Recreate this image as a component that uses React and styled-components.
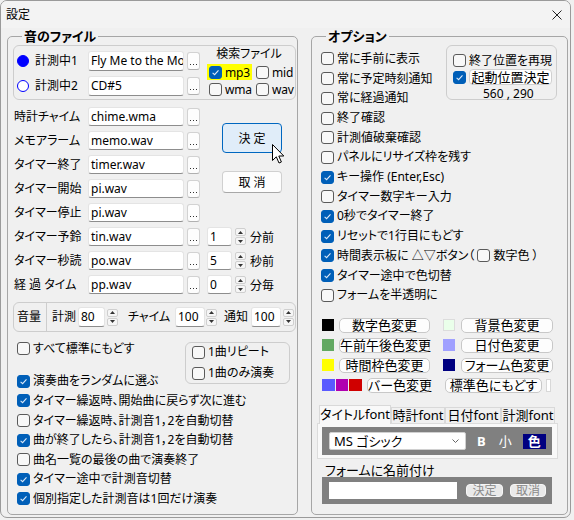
import React from 'react';
import styled, { createGlobalStyle } from 'styled-components';

const Global = createGlobalStyle`
  html, body { margin: 0; padding: 0; background: #f0f0f0; }
  body {
    font-family: "Noto Sans", "Noto Sans CJK JP", sans-serif;
    font-size: 12px;
    color: #000;
    font-feature-settings: "palt";
  }
  * { box-sizing: border-box; }
`;

const Window = styled.div`
  position: relative;
  width: 571px;
  height: 518px;
  background: #f0f0f0;
  border: 1px solid #9a9a9a;
  border-radius: 7px;
  overflow: hidden;
  display: flex;
  flex-direction: column;
`;

const TitleBar = styled.div`
  height: 27px;
  flex: none;
  display: flex;
  align-items: center;
  justify-content: space-between;
  padding: 0 8px 0 5px;
  background: #f3f3f3;
`;

const Title = styled.span`
  font-size: 12px;
  line-height: 14px;
`;

const Body = styled.div`
  display: flex;
  gap: 13px;
  padding: 0 2px 0 6px;
`;

const FieldSet = styled.fieldset`
  margin: 0;
  padding: 0;
  min-width: 0;
  flex: none;
  width: ${(p) => p.$w}px;
  height: 487px;
  border: 1px solid #a6a6a6;
  border-radius: 5px;
`;

const Legend = styled.legend`
  margin-left: 14px;
  padding: 0 2px;
  font-weight: bold;
  font-size: 13px;
  line-height: 16px;
`;

const LeftContent = styled.div`
  padding: 1px 1px 0 5px;
  display: flex;
  flex-direction: column;
`;

const RightContent = styled.div`
  padding: 1px 10px 0 9px;
  display: flex;
  flex-direction: column;
`;

const RoundBox = styled.div`
  border: 1px solid #cdcdcd;
  border-radius: 6px;
`;

const RadioBox = styled(RoundBox)`
  display: flex;
  height: 55px;
  padding: 5px 0 0 3px;
`;

const Col = styled.div`
  display: flex;
  flex-direction: column;
  gap: ${(p) => p.$gap || 0}px;
`;

const FieldRow = styled.div`
  display: flex;
  align-items: center;
  height: ${(p) => p.$h || 19}px;
`;

const Radio = styled.span`
  flex: none;
  width: 12px;
  height: 12px;
  border-radius: 50%;
  border: 1px solid #0000ff;
  background: ${(p) => (p.$on ? '#0000ff' : '#fff')};
  margin-right: 6px;
`;

const RowLabel = styled.span`
  flex: none;
  width: ${(p) => p.$w}px;
  margin-left: ${(p) => p.$ml || 0}px;
  padding-left: ${(p) => p.$pl || 0}px;
  white-space: nowrap;
  font-size: 12px;
  line-height: 14px;
`;

const TextField = styled.div`
  flex: none;
  width: ${(p) => p.$w}px;
  height: ${(p) => p.$h || 19}px;
  margin-left: ${(p) => p.$ml || 0}px;
  background: #fff;
  border: 1px solid #e4e4e4;
  border-bottom-color: #8d8d8d;
  border-radius: 3px;
  padding: 0 2px;
  font-size: 12px;
  line-height: ${(p) => (p.$h || 19) - 2}px;
  white-space: nowrap;
  overflow: hidden;
`;

const DotButtonEl = styled.div`
  flex: none;
  width: 13px;
  height: 18px;
  margin-left: 3px;
  background: #fdfdfd;
  border: 1px solid #d2d2d2;
  border-bottom-color: #b0b0b0;
  border-radius: 3px;
  display: flex;
  align-items: flex-end;
  justify-content: center;
  padding-bottom: 4px;
`;

const DotButton = () => (
  <DotButtonEl>
    <svg width="7" height="1" viewBox="0 0 7 1">
      <rect x="0" y="0" width="1" height="1" fill="#333" />
      <rect x="3" y="0" width="1" height="1" fill="#333" />
      <rect x="6" y="0" width="1" height="1" fill="#333" />
    </svg>
  </DotButtonEl>
);

const SearchCol = styled.div`
  margin-left: 7px;
  margin-top: -4px;
  display: flex;
  flex-direction: column;
`;

const SearchTitle = styled.div`
  width: 84px;
  text-align: center;
  font-size: 12px;
  line-height: 14px;
`;

const SearchGrid = styled.div`
  display: grid;
  grid-template-columns: 47px 38px;
  row-gap: 1px;
  margin-top: 3px;
`;

const FileCell = styled.div`
  justify-self: start;
  display: inline-flex;
  align-items: center;
  gap: 3px;
  height: 16px;
  padding: 0 2px 0 2px;
  background: ${(p) => (p.$hl ? '#ffff00' : 'transparent')};
  font-size: 12px;
  letter-spacing: -0.2px;
`;

const BoxEl = styled.span`
  flex: none;
  width: 13px;
  height: 13px;
  border-radius: 3px;
  border: 1px solid ${(p) => (p.$on ? '#005fb8' : '#5a5a5a')};
  background: ${(p) => (p.$on ? '#005fb8' : '#f8f8f8')};
  display: inline-flex;
  align-items: center;
  justify-content: center;
`;

const Check = ({ on }) => (
  <BoxEl $on={on}>
    {on && (
      <svg width="9" height="9" viewBox="0 0 9 9">
        <path d="M1.6 4.9 L3.6 6.7 L7.5 2.3" fill="none" stroke="#dbe8f7" strokeWidth="1.1" />
      </svg>
    )}
  </BoxEl>
);

const CheckRowEl = styled.div`
  display: flex;
  align-items: center;
  gap: 3px;
  height: ${(p) => p.$h || 19.6}px;
  white-space: nowrap;
  font-size: 12px;
  line-height: 14px;
`;

const CheckRow = ({ on, children, h }) => (
  <CheckRowEl $h={h}>
    <Check on={on} />
    <span>{children}</span>
  </CheckRowEl>
);

const FileArea = styled.div`
  margin-top: 7px;
  display: flex;
  flex-direction: column;
  gap: 5px;
`;

const TopRows = styled.div`
  display: flex;
`;

const ButtonCol = styled.div`
  display: flex;
  flex-direction: column;
  margin-left: 22px;
  padding-top: 16px;
`;

const DialogButton = styled.div`
  width: 60px;
  height: ${(p) => (p.$primary ? 30 : 22)}px;
  margin-top: ${(p) => p.$mt || 0}px;
  background: ${(p) => (p.$primary ? '#e0edf9' : '#fdfdfd')};
  border: 1px solid ${(p) => (p.$primary ? '#0067c0' : '#d0d0d0')};
  border-bottom-color: ${(p) => (p.$primary ? '#0067c0' : '#a8a8a8')};
  border-radius: 4px;
  display: flex;
  align-items: center;
  justify-content: center;
  font-size: 12px;
  white-space: pre;
`;

const SpinWrap = styled.div`
  flex: none;
  margin-left: ${(p) => p.$ml ?? 3}px;
  width: 11px;
  display: flex;
  flex-direction: column;
  gap: 1px;
`;

const SpinHalf = styled.div`
  height: 8px;
  background: #f6f6f6;
  border: 1px solid #cfcfcf;
  border-radius: 2px;
  display: flex;
  align-items: center;
  justify-content: center;
`;

const Spinner = ({ ml }) => (
  <SpinWrap $ml={ml}>
    <SpinHalf>
      <svg width="5" height="3" viewBox="0 0 5 3"><path d="M0 3 L2.5 0 L5 3 Z" fill="#333" /></svg>
    </SpinHalf>
    <SpinHalf>
      <svg width="5" height="3" viewBox="0 0 5 3"><path d="M0 0 L2.5 3 L5 0 Z" fill="#333" /></svg>
    </SpinHalf>
  </SpinWrap>
);

const Unit = styled.span`
  margin-left: ${(p) => p.$ml || 4}px;
  font-size: 12px;
  white-space: nowrap;
`;

const VolumeBox = styled(RoundBox)`
  margin-top: 8px;
  height: 30px;
  display: flex;
  align-items: center;
  padding-left: 3px;
`;

const Divider = styled.span`
  align-self: stretch;
  width: 1px;
  background: #cdcdcd;
`;

const BlockC = styled.div`
  margin-top: 7px;
  display: flex;
  justify-content: space-between;
`;

const LeftChecks = styled.div`
  display: flex;
  flex-direction: column;
  gap: ${(p) => p.$gap || 0}px;
  padding-left: 4px;
`;

const RepeatBox = styled(RoundBox)`
  margin-top: 3px;
  margin-right: 6px;
  width: 105px;
  height: 42px;
  padding-left: 6px;
  display: flex;
  flex-direction: column;
  gap: 3px;
`;

const RightTop = styled.div`
  display: flex;
  justify-content: space-between;
  align-items: flex-start;
`;

const TopList = styled.div`
  padding-top: 4.15px;
  display: flex;
  flex-direction: column;
`;

const PosBox = styled(RoundBox)`
  width: 111px;
  height: 55px;
  padding: 5px 0 0 6px;
  display: flex;
  flex-direction: column;
`;

const PosRow = styled.div`
  display: flex;
  align-items: center;
  gap: 3px;
  height: 18px;
  font-size: 12px;
  white-space: nowrap;
`;

const PosButton = styled.div`
  width: 83px;
  height: 16px;
  background: #fff;
  border: 1px solid #d0d0d0;
  border-radius: 4px;
  text-align: center;
  font-size: 13px;
  line-height: 14px;
`;

const Coords = styled.div`
  margin-top: 2px;
  padding-left: 30px;
  font-size: 12px;
  line-height: 14px;
  white-space: pre;
`;

const RightList = styled.div`
  display: flex;
  flex-direction: column;
`;

const InlineText = styled.span`
  display: inline-flex;
  align-items: center;
  gap: 3px;
`;

const ColorGrid = styled.div`
  margin-top: 13px;
  margin-left: 1px;
  display: grid;
  grid-template-columns: 121px 112px;
  row-gap: 6px;
`;

const ColorCell = styled.div`
  display: flex;
  align-items: center;
  height: 14px;
  gap: ${(p) => p.$gap ?? 5}px;
`;

const Swatch = styled.span`
  flex: none;
  width: ${(p) => p.$w || 12}px;
  height: 12px;
  background: ${(p) => p.$c};
  border: ${(p) => (p.$light ? '1px solid #dcdcdc' : 'none')};
`;

const SwatchGroup = styled.span`
  display: flex;
  gap: 1px;
`;

const ColorButton = styled.div`
  flex: none;
  width: ${(p) => p.$w}px;
  height: 15px;
  margin-left: ${(p) => p.$ml || 0}px;
  background: #fdfdfd;
  border: 1px solid #c8c8c8;
  border-radius: 5px;
  text-align: center;
  font-size: 13px;
  line-height: 13px;
  white-space: nowrap;
`;

const StubBar = styled.span`
  width: 5px;
  height: 13px;
  margin-left: 4px;
  background: #fff;
  border: 1px solid #d8d8d8;
`;

const TabStrip = styled.div`
  margin-top: 13px;
  margin-left: -2px;
  display: flex;
  align-items: flex-end;
  position: relative;
  z-index: 1;
`;

const Tab = styled.div`
  flex: none;
  width: ${(p) => p.$w}px;
  height: ${(p) => (p.$active ? 19 : 16)}px;
  margin-bottom: ${(p) => (p.$active ? -1 : 0)}px;
  background: ${(p) => (p.$active ? '#f9f9f9' : '#f0f0f0')};
  border: 1px solid #d9d9d9;
  border-bottom: none;
  text-align: center;
  font-size: 13px;
  line-height: ${(p) => (p.$active ? 17 : 15)}px;
  white-space: nowrap;
`;

const TabPanel = styled.div`
  margin-left: -4px;
  width: 241px;
  height: 36px;
  background: #f9f9f9;
  border: 1px solid #dcdcdc;
  padding: 3px 0 0 4px;
`;

const GreyBar = styled.div`
  width: 230px;
  height: ${(p) => p.$h}px;
  margin-left: ${(p) => p.$ml || 0}px;
  background: #808080;
  display: flex;
  align-items: center;
  padding-left: 7px;
`;

const FontSelect = styled.div`
  flex: none;
  width: 137px;
  height: 18px;
  background: #fff;
  border: 1px solid #d0d0d0;
  border-radius: 2px;
  display: flex;
  align-items: center;
  justify-content: space-between;
  padding: 0 6px 0 4px;
  font-size: 13px;
  line-height: 16px;
`;

const BarText = styled.span`
  margin-left: ${(p) => p.$ml}px;
  color: #fff;
  font-size: 13px;
  font-weight: ${(p) => (p.$bold ? 'bold' : 'normal')};
  line-height: 15px;
`;

const ColorChip = styled.span`
  margin-left: 11px;
  width: 23px;
  height: 15px;
  background: #000080;
  color: #fff;
  font-weight: bold;
  font-size: 13px;
  line-height: 15px;
  text-align: center;
`;

const NameLabel = styled.div`
  margin-top: 4px;
  padding-left: 4px;
  font-size: 13px;
  line-height: 14px;
`;

const NameInput = styled.div`
  flex: none;
  width: 128px;
  height: 17px;
  background: #fff;
`;

const SmallButton = styled.div`
  flex: none;
  width: ${(p) => p.$w}px;
  height: 13px;
  margin-left: ${(p) => p.$ml}px;
  background: #e9e9e9;
  border: 1px solid #f6f6f6;
  border-radius: 4px;
  color: #8a8a8a;
  font-size: 12px;
  line-height: 11px;
  text-align: center;
`;

const CursorSvg = styled.svg`
  position: absolute;
  left: 271px;
  top: 143px;
`;

const CloseIcon = () => (
  <svg width="10" height="10" viewBox="0 0 10 10">
    <path d="M0.5 0.5 L9.5 9.5 M9.5 0.5 L0.5 9.5" stroke="#222" strokeWidth="1" />
  </svg>
);

const Chevron = () => (
  <svg width="7" height="4" viewBox="0 0 7 4">
    <path d="M0.5 0.5 L3.5 3.5 L6.5 0.5" fill="none" stroke="#666" strokeWidth="1" />
  </svg>
);

const fileRows = [
  ['時計チャイム', 'chime.wma'],
  ['メモアラーム', 'memo.wav'],
  ['タイマー終了', 'timer.wav'],
  ['タイマー開始', 'pi.wav'],
  ['タイマー停止', 'pi.wav'],
];

const spinRows = [
  ['タイマー予鈴', 'tin.wav', '1', '分前'],
  ['タイマー秒読', 'po.wav', '5', '秒前'],
  ['経 過 タイム', 'pp.wav', '0', '分毎'],
];

const leftList = [
  ['タイマー繰返時、開始曲に戻らず次に進む', true],
  ['タイマー繰返時、計測音1，2を自動切替', false],
  ['曲が終了したら、計測音1，2を自動切替', true],
  ['曲名一覧の最後の曲で演奏終了', false],
  ['タイマー途中で計測音切替', true],
  ['個別指定した計測音は1回だけ演奏', true],
];

const rightTop = [
  ['常に手前に表示', false],
  ['常に予定時刻通知', false],
  ['常に経過通知', false],
];

const rightList = [
  ['終了確認', false],
  ['計測値破棄確認', false],
  ['パネルにリサイズ枠を残す', false],
  ['キー操作 (Enter,Esc)', true],
  ['タイマー数字キー入力', false],
  ['0秒でタイマー終了', true],
  ['リセットで1行目にもどす', true],
  ['__special', true],
  ['タイマー途中で色切替', true],
  ['フォームを半透明に', false],
];

const tabs = [
  ['タイトルfont', 72, true],
  ['時計font', 54, false],
  ['日付font', 56, false],
  ['計測font', 54, false],
];

export default function App() {
  return (
    <>
      <Global />
      <Window>
        <TitleBar>
          <Title>設定</Title>
          <CloseIcon />
        </TitleBar>
        <Body>
          <FieldSet $w={291}>
            <Legend>音のファイル</Legend>
            <LeftContent>
              <RadioBox>
                <Col $gap={5}>
                  <FieldRow $h={20}>
                    <Radio $on />
                    <RowLabel $w={53}>計測中1</RowLabel>
                    <TextField $w={96} $h={20}>Fly Me to the Moon</TextField>
                    <DotButton />
                  </FieldRow>
                  <FieldRow $h={20}>
                    <Radio />
                    <RowLabel $w={53}>計測中2</RowLabel>
                    <TextField $w={96} $h={20}>CD#5</TextField>
                    <DotButton />
                  </FieldRow>
                </Col>
                <SearchCol>
                  <SearchTitle>検索ファイル</SearchTitle>
                  <SearchGrid>
                    <FileCell $hl><Check on />mp3</FileCell>
                    <FileCell><Check />mid</FileCell>
                    <FileCell><Check />wma</FileCell>
                    <FileCell><Check />wav</FileCell>
                  </SearchGrid>
                </SearchCol>
              </RadioBox>

              <FileArea>
                <TopRows>
                  <Col $gap={5}>
                    {fileRows.map(([l, v]) => (
                      <FieldRow key={l}>
                        <RowLabel $w={75} $pl={1}>{l}</RowLabel>
                        <TextField $w={96}>{v}</TextField>
                        <DotButton />
                      </FieldRow>
                    ))}
                  </Col>
                  <ButtonCol>
                    <DialogButton $primary>決 定</DialogButton>
                    <DialogButton $mt={18}>取 消</DialogButton>
                  </ButtonCol>
                </TopRows>
                {spinRows.map(([l, v, n, u]) => (
                  <FieldRow key={l}>
                    <RowLabel $w={75} $pl={1}>{l}</RowLabel>
                    <TextField $w={96}>{v}</TextField>
                    <DotButton />
                    <TextField $w={25} $ml={7}>{n}</TextField>
                    <Spinner />
                    <Unit>{u}</Unit>
                  </FieldRow>
                ))}
              </FileArea>

              <VolumeBox>
                <RowLabel $w={29}>音量</RowLabel>
                <Divider />
                <RowLabel $w={26} $ml={5}>計測</RowLabel>
                <TextField $w={27} $h={20}>80</TextField>
                <Spinner ml={2} />
                <RowLabel $w={47} $ml={10}>チャイム</RowLabel>
                <TextField $w={30} $h={20}>100</TextField>
                <Spinner ml={1} />
                <RowLabel $w={27} $ml={7}>通知</RowLabel>
                <TextField $w={30} $h={20}>100</TextField>
                <Spinner ml={2} />
              </VolumeBox>

              <BlockC>
                <LeftChecks $gap={13}>
                  <CheckRow on={false}>すべて標準にもどす</CheckRow>
                  <CheckRow on>演奏曲をランダムに選ぶ</CheckRow>
                </LeftChecks>
                <RepeatBox>
                  <CheckRow on={false} h={18}>1曲リピート</CheckRow>
                  <CheckRow on={false} h={18}>1曲のみ演奏</CheckRow>
                </RepeatBox>
              </BlockC>
              <LeftChecks>
                {leftList.map(([t, on]) => (
                  <CheckRow key={t} on={on}>{t}</CheckRow>
                ))}
              </LeftChecks>
            </LeftContent>
          </FieldSet>

          <FieldSet $w={257}>
            <Legend>オプション</Legend>
            <RightContent>
              <RightTop>
                <TopList>
                  {rightTop.map(([t, on]) => (
                    <CheckRow key={t} on={on} h={19.7}>{t}</CheckRow>
                  ))}
                </TopList>
                <PosBox>
                  <PosRow><Check />終了位置を再現</PosRow>
                  <PosRow><Check on /><PosButton>起動位置決定</PosButton></PosRow>
                  <Coords>560 , 290</Coords>
                </PosBox>
              </RightTop>
              <RightList>
                {rightList.map(([t, on]) =>
                  t === '__special' ? (
                    <CheckRow key={t} on={on} h={19.7}>
                      <InlineText>時間表示板に △▽ボタン（ <Check /> 数字色 ）</InlineText>
                    </CheckRow>
                  ) : (
                    <CheckRow key={t} on={on} h={19.7}>{t}</CheckRow>
                  )
                )}
              </RightList>

              <ColorGrid>
                <ColorCell><Swatch $c="#000000" /><ColorButton $w={91}>数字色変更</ColorButton></ColorCell>
                <ColorCell $gap={6}><Swatch $c="#eaffea" $light /><ColorButton $w={92}>背景色変更</ColorButton></ColorCell>
                <ColorCell><Swatch $c="#62a862" /><ColorButton $w={91}>午前午後色変更</ColorButton></ColorCell>
                <ColorCell $gap={6}><Swatch $c="#a0a0ff" /><ColorButton $w={92}>日付色変更</ColorButton></ColorCell>
                <ColorCell><Swatch $c="#ffff00" /><ColorButton $w={91}>時間枠色変更</ColorButton></ColorCell>
                <ColorCell $gap={6}><Swatch $c="#000080" /><ColorButton $w={92}>フォーム色変更</ColorButton></ColorCell>
                <ColorCell>
                  <SwatchGroup>
                    <Swatch $c="#5a5aff" $w={13} />
                    <Swatch $c="#b000b0" $w={12} />
                    <Swatch $c="#d00000" $w={13} />
                  </SwatchGroup>
                  <ColorButton $w={63}>バー色変更</ColorButton>
                </ColorCell>
                <ColorCell $gap={0}>
                  <ColorButton $w={97} $ml={2}>標準色にもどす</ColorButton>
                  <StubBar />
                </ColorCell>
              </ColorGrid>

              <TabStrip>
                {tabs.map(([t, w, a]) => (
                  <Tab key={t} $w={w} $active={a}>{t}</Tab>
                ))}
              </TabStrip>
              <TabPanel>
                <GreyBar $h={28}>
                  <FontSelect>
                    <span>MS ゴシック</span>
                    <Chevron />
                  </FontSelect>
                  <BarText $ml={11} $bold>B</BarText>
                  <BarText $ml={13}>小</BarText>
                  <ColorChip>色</ColorChip>
                </GreyBar>
              </TabPanel>

              <NameLabel>フォームに名前付け</NameLabel>
              <GreyBar $h={27} $ml={1}>
                <NameInput />
                <SmallButton $w={37} $ml={9}>決定</SmallButton>
                <SmallButton $w={36} $ml={7}>取消</SmallButton>
              </GreyBar>
            </RightContent>
          </FieldSet>
        </Body>

        <CursorSvg width="13" height="20" viewBox="0 0 13 20">
          <path d="M0.5 0.5 L0.5 16.5 L4.3 12.8 L7 19 L9.4 18 L6.8 12 L11.8 12 Z" fill="#fff" stroke="#000" strokeWidth="1" strokeLinejoin="round" />
        </CursorSvg>
      </Window>
    </>
  );
}
